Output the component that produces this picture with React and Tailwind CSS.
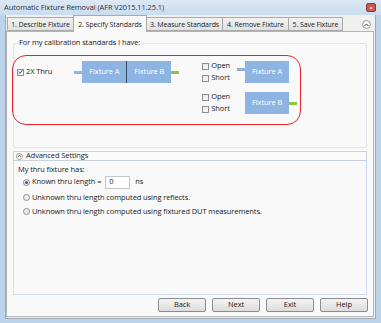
export default function App() {
  const Check = ({ checked }) => (
    <span className="w-[7px] h-[7px] border border-[#8f8f8f] bg-gradient-to-br from-[#e6e6e6] to-[#fafafa] flex items-center justify-center shrink-0">
      {checked && (
        <svg width="6" height="6" viewBox="0 0 6 6">
          <path d="M0.8 3 L2.4 4.6 L5.2 1" stroke="#2a4f86" strokeWidth="1.2" fill="none" />
        </svg>
      )}
    </span>
  );
  const Radio = ({ on }) => (
    <span className="w-[7px] h-[7px] rounded-full border border-[#8f8f8f] bg-[#ececec] flex items-center justify-center shrink-0">
      {on && <span className="w-[3px] h-[3px] rounded-full bg-[#2f5f9e]" />}
    </span>
  );
  const Box = ({ children, cls = "" }) => (
    <div className={"h-[22px] bg-[#8eb4e3] text-white flex items-center justify-center shrink-0 " + cls}>{children}</div>
  );
  const Tab = ({ children, w, active }) =>
    active ? (
      <div className={"h-[17px] -mb-px bg-[#f9f9f9] border border-b-0 border-[#a9a9a9] flex items-center justify-center whitespace-nowrap relative z-10 " + w}>
        {children}
      </div>
    ) : (
      <div className={"h-[14px] mt-[2px] bg-gradient-to-b from-[#f2f2f2] to-[#e2e2e2] border border-[#a9a9a9] flex items-center justify-center whitespace-nowrap -ml-px first:ml-0 " + w}>
        {children}
      </div>
    );
  const Btn = ({ children }) => (
    <div className="w-[48px] h-[14px] border border-[#8d8d8d] rounded-[2px] bg-gradient-to-b from-[#f4f4f4] to-[#dcdcdc] flex items-center justify-center">
      {children}
    </div>
  );
  const OpenShort = () => (
    <div className="flex flex-col gap-[4px]">
      <div className="flex items-center gap-[2px] h-[8px]"><Check /><span>Open</span></div>
      <div className="flex items-center gap-[2px] h-[8px]"><Check /><span>Short</span></div>
    </div>
  );
  return (
    <div className="w-[381px] h-[323px] bg-[#bcd3ec] overflow-hidden flex flex-col font-['Open_Sans',sans-serif] text-[7.5px] tracking-[-0.1px] text-[#1a1a1a] leading-none">
      <div className="h-[15px] shrink-0 flex items-center justify-between pl-[4px] pr-[5px] bg-gradient-to-b from-[#dce8f5] to-[#c9dcf0]">
        <span className="text-[#333]">Automatic Fixture Removal (AFR V2015.11.25.1)</span>
        <div className="w-[10px] h-[9px] rounded-[2px] bg-[#c8584c] border border-[#8a3a32] flex items-center justify-center text-white text-[6px] font-bold">×</div>
      </div>
      <div className="flex-1 mx-[5px] mb-[4px] bg-[#f0f0f0] border border-t-0 border-[#9fa9b5] flex flex-col">
        <div className="h-[16px] shrink-0 flex items-start pl-[1px] pr-[4px] relative text-[7px]">
          <Tab w="w-[67px]">1. Describe Fixture</Tab>
          <Tab w="w-[74px] -ml-px" active>2. Specify Standards</Tab>
          <Tab w="w-[77px] -ml-px">3. Measure Standards</Tab>
          <Tab w="w-[67px]">4. Remove Fixture</Tab>
          <Tab w="w-[55px]">5. Save Fixture</Tab>
          <div className="ml-auto mt-[5px] w-[9px] h-[9px] rounded-full border border-[#9a9a9a] bg-[#f7f7f7] flex items-center justify-center">
            <svg width="5" height="4" viewBox="0 0 5 4"><path d="M0.5 3 L2.5 1 L4.5 3" stroke="#444" strokeWidth="1" fill="none" /></svg>
          </div>
        </div>
        <div className="flex-1 mr-[1px] mb-[1px] bg-[#f9f9f9] border border-[#b4b4b4] flex flex-col px-[6px] relative">
          {/* Group 1 */}
          <div className="mt-[11px] h-[105px] border border-[#dfe4ea] rounded-[2px] relative">
            <span className="absolute -top-[5px] left-[4px] bg-[#f9f9f9] px-[1px]">For my calibration standards I have:</span>
            <div className="flex items-start mt-[17px]">
              <div className="flex items-center h-[22px] ml-[3px]">
                <Check checked />
                <span className="ml-[2px]">2X Thru</span>
                <div className="ml-[22px] w-[8px] h-[3px] bg-[#8eb4e3]" />
                <Box cls="w-[44px]">Fixture A</Box>
                <div className="w-px h-[22px] bg-[#3b4b5e]" />
                <Box cls="w-[44px]">Fixture B</Box>
                <div className="w-[8px] h-[3px] bg-[#8dc63f]" />
              </div>
              <div className="ml-[23px] flex flex-col">
                <div className="flex items-center h-[22px]">
                  <OpenShort />
                  <div className="ml-[7px] w-[8px] h-[3px] bg-[#8eb4e3] self-start mt-[7px]" />
                  <Box cls="w-[44px]">Fixture A</Box>
                </div>
                <div className="flex items-center h-[22px] mt-[9px]">
                  <OpenShort />
                  <div className="ml-[15px]" />
                  <Box cls="w-[44px]">Fixture B</Box>
                  <div className="w-[8px] h-[3px] bg-[#8dc63f]" />
                </div>
              </div>
            </div>
          </div>
          {/* red highlight overlay */}
          <div className="absolute left-[5px] top-[23px] w-[289px] h-[70px] border border-[#e8242a] rounded-[14px] pointer-events-none" />
          {/* Advanced */}
          <div className="mt-[3px] h-[10px] border border-[#c9d1db] bg-[#fbfbfb] flex items-center pl-[2px] gap-[3px]">
            <div className="w-[7px] h-[7px] rounded-full border border-[#9a9a9a] bg-white flex items-center justify-center">
              <svg width="5" height="4" viewBox="0 0 5 4"><path d="M0.8 3 L2.5 1.2 L4.2 3" stroke="#444" strokeWidth="0.9" fill="none" /></svg>
            </div>
            <span>Advanced Settings</span>
          </div>
          <div className="h-[134px] border border-t-0 border-[#cddbec] flex flex-col pl-[4px] pt-[5px]">
            <span>My thru fixture has:</span>
            <div className="flex items-center ml-[5px] mt-[2px] gap-[2px]">
              <Radio on />
              <span>Known thru length =</span>
              <div className="ml-[2px] w-[25px] h-[13px] bg-white border border-[#c5c5c5] flex items-center pl-[3px]">0</div>
              <span className="ml-[3px]">ns</span>
            </div>
            <div className="flex items-center ml-[5px] mt-[5px] gap-[2px]">
              <Radio />
              <span>Unknown thru length computed using reflects.</span>
            </div>
            <div className="flex items-center ml-[5px] mt-[7px] gap-[2px]">
              <Radio />
              <span>Unknown thru length computed using fixtured DUT measurements.</span>
            </div>
          </div>
          <div className="flex justify-end gap-[6px] mt-[3px] -mr-[1px]">
            <Btn>Back</Btn>
            <Btn>Next</Btn>
            <Btn>Exit</Btn>
            <Btn>Help</Btn>
          </div>
        </div>
      </div>
    </div>
  );
}
